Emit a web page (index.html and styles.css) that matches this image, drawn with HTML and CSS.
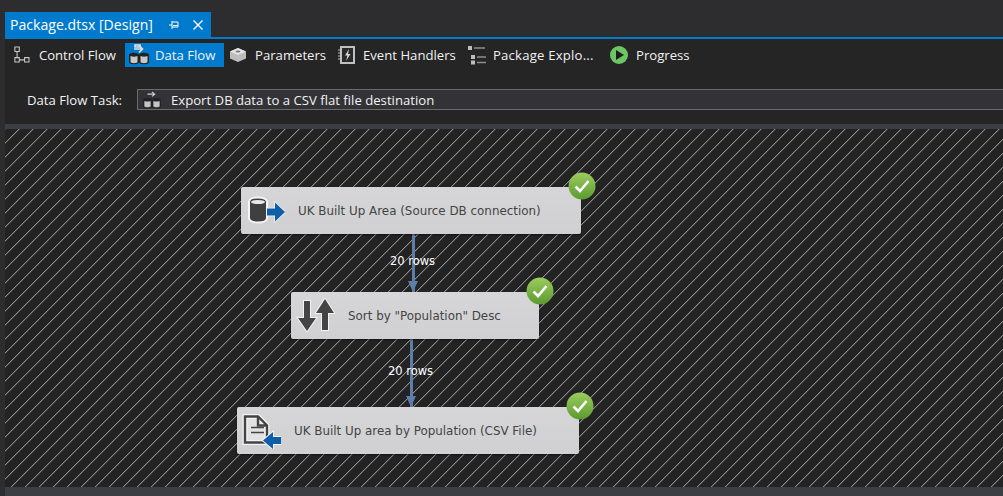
FILE: index.html
```html
<!DOCTYPE html>
<html lang="en">
<head>
  <meta charset="UTF-8">
  <meta name="viewport" content="width=device-width, initial-scale=1.0">
  <title>Package.dtsx [Design]</title>
  <link rel="stylesheet" href="styles.css">
</head>
<body>

  <div class="tab-strip">
    <div class="doc-tab">
      <span class="doc-title">Package.dtsx [Design]</span>
      <svg class="doc-pin" width="12" height="12" viewBox="0 0 12 12"><path d="M1 6h3M4 2v8M4 3h6v5H4M5 6.500h5" fill="none" stroke="#fff" stroke-width="1"/></svg>
      <svg class="doc-close" width="12" height="12" viewBox="0 0 12 12"><path d="M1.500 1.500l9 9M10.500 1.500l-9 9" stroke="#fff" stroke-width="1.400"/></svg>
    </div>
  </div>

  <div class="designer">
    <div class="toolbar">
      <div class="tool tool-control">
        <svg width="18" height="20" viewBox="0 0 18 20"><path d="M1 1h5v5H1zM1 13h5v5H1zM12 13h5v5h-5zM3.500 6v7M6 15.500h6" fill="none" stroke="#c8c8c8" stroke-width="1.200"/></svg>
        <span>Control Flow</span>
      </div>
      <div class="tool tool-active">
        <svg width="20" height="22" viewBox="0 0 20 22"><path d="M6 1h5v2h-5zM5 5h8M10 1.500l3.500 3.500L10 8.500" fill="none" stroke="#e4e4e4" stroke-width="1.600"/><path d="M0 11c0-3 10-3 10 0v7c0 3-10 3-10 0zM10 11c0-3 10-3 10 0v7c0 3-10 3-10 0z" fill="#222"/><path d="M1.500 12q3.500 1.500 7 0v6c0 1.500-7 1.500-7 0zM11.500 12q3.500 1.500 7 0v6c0 1.500-7 1.500-7 0z" fill="#c8c8c8"/></svg>
        <span>Data Flow</span>
      </div>
      <div class="tool tool-params">
        <svg width="18" height="16" viewBox="0 0 18 16"><path d="M9 1l8 3.500v7L9 15l-8-3.500v-7z" fill="#bdbdbd"/><path d="M1 4.500L9 8l8-3.500L9 1z" fill="#e6e6e6"/><ellipse cx="9" cy="4.500" rx="2.500" ry="1" fill="#777"/></svg>
        <span>Parameters</span>
      </div>
      <div class="tool tool-events">
        <svg width="17" height="18" viewBox="0 0 17 18"><rect x="3" y="1" width="13" height="16" fill="#2a2a2a" stroke="#c0c0c0" stroke-width="2"/><path d="M0 4h3M0 7h3M0 10h3M0 13h3" stroke="#c0c0c0"/><path d="M11 3L7 9.500h2.500L8 15l4.500-7H10z" fill="#d8d8d8"/></svg>
        <span>Event Handlers</span>
      </div>
      <div class="tool tool-explorer">
        <svg width="20" height="20" viewBox="0 0 20 20"><path d="M1 1h4v4H1zM4 10h4v4H4zM4 15.500h4v4H4z" fill="#bdbdbd"/><path d="M7 3h11M10 12h9M10 17.500h9" stroke="#8f8f8f" stroke-width="1.600"/></svg>
        <span>Package Explo...</span>
      </div>
      <div class="tool tool-progress">
        <svg width="18" height="18" viewBox="0 0 18 18"><circle cx="9" cy="9" r="9" fill="#6cc664"/><path d="M6 4l8 5-8 5z" fill="#1e1e1e"/></svg>
        <span>Progress</span>
      </div>
    </div>

    <div class="task-row">
      <span class="task-label">Data Flow Task:</span>
      <div class="task-combo">
        <svg width="18" height="18" viewBox="0 0 20 20"><path d="M5 3.500h8M10 1l3 2.500L10 6" fill="none" stroke="#ccc" stroke-width="1.300"/><path d="M0 10c0-3 10-3 10 0v7c0 3-10 3-10 0zM10 10c0-3 10-3 10 0v7c0 3-10 3-10 0z" fill="#222"/><path d="M1.500 11q3.500 1.500 7 0v6c0 1.500-7 1.500-7 0zM11.500 11q3.500 1.500 7 0v6c0 1.500-7 1.500-7 0z" fill="#c4c4c4"/></svg>
        <span>Export DB data to a CSV flat file destination</span>
      </div>
    </div>

    <div class="band"></div>

    <div class="canvas">
      <svg class="hatch" width="998" height="358">
        <defs>
          <pattern id="stripes" width="14" height="14" patternUnits="userSpaceOnUse">
            <g shape-rendering="crispEdges">
              <path d="M13 0h1v1h-1zM12 1h1v1h-1zM11 2h1v1h-1zM10 3h1v1h-1zM9 4h1v1H9zM8 5h1v1H8zM7 6h1v1H7zM6 7h1v1H6zM5 8h1v1H5zM4 9h1v1H4zM3 10h1v1H3zM2 11h1v1H2zM1 12h1v1H1zM0 13h1v1H0z" fill="#8c8c8c"/>
              <path d="M13 1h1v1h-1zM12 2h1v1h-1zM11 3h1v1h-1zM10 4h1v1h-1zM9 5h1v1H9zM8 6h1v1H8zM7 7h1v1H7zM6 8h1v1H6zM5 9h1v1H5zM4 10h1v1H4zM3 11h1v1H3zM2 12h1v1H2zM1 13h1v1H1zM0 0h1v1H0z" fill="#464646"/>
            </g>
          </pattern>
        </defs>
        <rect width="998" height="358" fill="url(#stripes)"/>
      </svg>

      <div class="pipe pipe-one"><span class="pipe-label">20 rows</span></div>
      <div class="pipe pipe-two"><span class="pipe-label">20 rows</span></div>

      <div class="node node-source">
        <svg width="40" height="36" viewBox="0 0 40 36"><path d="M4 9c0-6 18-6 18 0v16c0 6-18 6-18 0z" fill="#3f3f3f" stroke="#f4f4f4" stroke-width="2"/><ellipse cx="13" cy="9" rx="7" ry="2" fill="#e8e8e8"/><path d="M22 15.500h8v-6l10 9.500-10 9.500v-6h-8z" fill="#0e5fa8" stroke="#f4f4f4" stroke-width="1.500" paint-order="stroke"/></svg>
        <span>UK Built Up Area (Source DB connection)</span>
        <svg class="node-check" width="28" height="28" viewBox="0 0 28 28"><use href="#check"/></svg>
      </div>

      <div class="node node-sort">
        <svg width="40" height="36" viewBox="0 0 40 36"><path d="M9 3h6v17h6L12 33 3 20h6z" fill="#444" stroke="#f4f4f4" stroke-width="2" paint-order="stroke"/><path d="M30 1l9 14h-6v17h-6V15h-6z" fill="#444" stroke="#f4f4f4" stroke-width="2" paint-order="stroke"/></svg>
        <span>Sort by "Population" Desc</span>
        <svg class="node-check" width="28" height="28" viewBox="0 0 28 28"><use href="#check"/></svg>
      </div>

      <div class="node node-dest">
        <svg width="40" height="36" viewBox="0 0 40 36"><path d="M4 3.500h13l9 9v17H4z" fill="#e2e2e2" stroke="#f4f4f4" stroke-width="5"/><path d="M4 3.500h13l9 9v17H4zM17 3.500v9h9" fill="none" stroke="#444" stroke-width="2.400"/><path d="M10 14.500h13M10 19.500h13" stroke="#444" stroke-width="1.600"/><path d="M40 24v7h-8v5l-10-8.500 10-8.500v5z" fill="#0e5fa8" stroke="#f4f4f4" stroke-width="2" paint-order="stroke"/></svg>
        <span>UK Built Up area by Population (CSV File)</span>
        <svg class="node-check" width="28" height="28" viewBox="0 0 28 28"><use href="#check"/></svg>
      </div>
    </div>

    <div class="band band-bottom"></div>
  </div>

  <svg width="0" height="0" class="defs">
    <defs>
      <linearGradient id="green" x1="0" y1="0" x2="0" y2="1">
        <stop offset="0" stop-color="#9ccc5e"/>
        <stop offset="1" stop-color="#5b9a2f"/>
      </linearGradient>
      <g id="check">
        <circle cx="14" cy="14" r="13.500" fill="url(#green)"/>
        <path d="M7.500 14.500l4.500 4.500 8.500-10" fill="none" stroke="#fff" stroke-width="2.600"/>
      </g>
    </defs>
  </svg>

</body>
</html>
```

FILE: styles.css
```css
* {
  box-sizing: border-box;
}

body {
  margin: 0;
  width: 1003px;
  height: 496px;
  overflow: hidden;
  background-color: #2d2d30;
  color: #f1f1f1;
  font-family: "Open Sans", "Noto Sans", sans-serif;
  font-size: 13.150px;
}

.defs {
  position: absolute;
}

.tab-strip {
  height: 37px;
  padding: 12px 0 0 5px;
}

.doc-tab {
  display: flex;
  align-items: center;
  width: 206px;
  height: 25px;
  padding-left: 5px;
  background-color: #007acc;
  color: #fff;
  font-size: 14.100px;
}

.doc-title {
  width: 158px;
}

.doc-close {
  margin-left: 12px;
}

.designer {
  display: flex;
  flex-direction: column;
  height: 459px;
  margin-left: 5px;
  border-top: 2px solid #007acc;
  background-color: #252526;
}

.toolbar {
  display: flex;
  align-items: center;
  height: 29px;
  padding: 3px 0 0 9px;
}

.tool {
  display: flex;
  flex: none;
  align-items: center;
  gap: 8px;
  height: 24px;
  white-space: nowrap;
}

.tool-control {
  gap: 9px;
  width: 102px;
}

.tool-active {
  gap: 6px;
  width: 99px;
  margin-left: 9px;
  padding-left: 4px;
  background-color: #007acc;
}

.tool-params {
  width: 98px;
  margin-left: 5px;
}

.tool-events {
  width: 118px;
  margin-left: 11px;
}

.tool-explorer {
  gap: 6px;
  width: 127px;
  margin-left: 11px;
  letter-spacing: 0.200px;
}

.tool-progress {
  margin-left: 16px;
}

.task-row {
  display: flex;
  align-items: center;
  gap: 14px;
  height: 21px;
  margin-top: 21px;
  padding-left: 22px;
}

.task-label {
  width: 96px;
}

.task-combo {
  display: flex;
  flex: 1;
  align-items: center;
  gap: 10px;
  height: 21px;
  padding-left: 5px;
  background-color: #333337;
  border: 1px solid #6a6a6a;
  border-right: none;
}

.band {
  flex: none;
  height: 5px;
  margin-top: 14px;
  background-color: #3b3e43;
}

.band-bottom {
  flex: 1;
  margin-top: 0;
}

.canvas {
  position: relative;
  flex: none;
  height: 358px;
  background-color: #232323;
}

.hatch {
  position: absolute;
  top: 0;
  left: 0;
}

.node {
  position: absolute;
  display: flex;
  align-items: center;
  height: 47px;
  padding-left: 4px;
  background: linear-gradient(#d6d6d8, #d0d0d2);
  border-radius: 2px;
  box-shadow: 0 1px 2px rgba(0, 0, 0, 0.5);
  color: #444;
  font-family: "DejaVu Sans", sans-serif;
  font-size: 11.900px;
}

.node span {
  margin-left: 13px;
}

.node-source {
  top: 58px;
  left: 236px;
  width: 340px;
}

.node-sort {
  top: 163px;
  left: 286px;
  width: 248px;
}

.node-dest {
  top: 278px;
  left: 232px;
  width: 342px;
}

.node-check {
  position: absolute;
  top: -15px;
  right: -15px;
}

.pipe {
  position: absolute;
  width: 3px;
  background-color: #5d7ea8;
}

.pipe::after {
  content: "";
  position: absolute;
  bottom: 0;
  left: -4px;
  border-top: 11px solid #5d7ea8;
  border-left: 5.500px solid transparent;
  border-right: 5.500px solid transparent;
}

.pipe-one {
  top: 105px;
  left: 407px;
  height: 58px;
}

.pipe-two {
  top: 210px;
  left: 405px;
  height: 68px;
}

.pipe-label {
  position: absolute;
  left: -23px;
  width: 47px;
  color: #fff;
  font-family: "DejaVu Sans", sans-serif;
  font-size: 11.500px;
  text-align: center;
  white-space: nowrap;
}

.pipe-one .pipe-label {
  top: 20px;
}

.pipe-two .pipe-label {
  top: 25px;
}
```
